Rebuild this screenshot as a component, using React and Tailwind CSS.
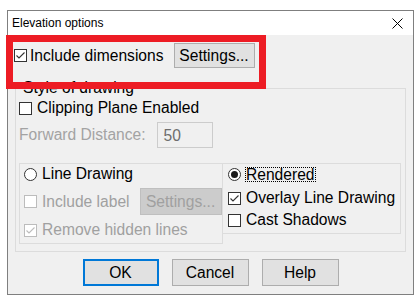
import React from "react";

function Check({ checked, disabled }) {
	return (
		<span className={disabled ? "w-[13px] h-[13px] border border-[#bcbcbc] bg-white flex items-center justify-center shrink-0" : "w-[13px] h-[13px] border border-[#333333] bg-white flex items-center justify-center shrink-0"}>
			{checked && (
				<svg width="11" height="11" viewBox="0 0 11 11">
					<path d="M1.5 5.5 L4 8 L9.5 2.5" fill="none" stroke={disabled ? "#bcbcbc" : "#333333"} strokeWidth="1.1" />
				</svg>
			)}
		</span>
	);
}

function Radio({ checked }) {
	return (
		<span className="w-[13px] h-[13px] rounded-full border border-[#333333] bg-white flex items-center justify-center shrink-0">
			{checked && <span className="w-[7px] h-[7px] rounded-full bg-[#1a1a1a]" />}
		</span>
	);
}

export default function App() {
	return (
		<div className="w-[420px] h-[300px] bg-white relative pt-[10px] pl-[7px] font-['Liberation_Sans',Arial,sans-serif] text-black">
			<div className="w-[407px] h-[285px] border border-[#7f7f7f] flex flex-col">
				{/* title bar */}
				<div className="h-[24px] bg-white flex items-center justify-between pl-[4px] pr-[10px]">
					<span className="text-[12px]">Elevation options</span>
					<svg width="11" height="11" viewBox="0 0 11 11">
						<path d="M0.5 0.5 L10.5 10.5 M10.5 0.5 L0.5 10.5" stroke="#000" strokeWidth="1" />
					</svg>
				</div>

				<div className="flex-1 bg-[#f0f0f0] text-[15.6px] leading-[18px]">
					{/* top row */}
					<div className="flex items-center mt-[8px] pl-[6px] h-[25px]">
						<Check checked />
						<span className="ml-[3px]">Include dimensions</span>
						<button className="ml-[10px] w-[81px] h-[25px] border border-[#adadad] bg-[#e1e1e1]">Settings...</button>
					</div>

					{/* group */}
					<fieldset className="mx-[7px] mt-[11px] border border-[#dcdcdc] px-[3px] pb-[7px]">
						<legend className="ml-[1px] px-[3px]">Style of drawing</legend>

						<div className="flex items-center h-[18px] mt-[2px]">
							<Check />
							<span className="ml-[5px]">Clipping Plane Enabled</span>
						</div>

						<div className="flex items-center mt-[5px]">
							<span className="text-[#a3a3a3]">Forward Distance:</span>
							<div className="ml-[11px] w-[56px] h-[26px] border border-[#cccccc] bg-[#f0f0f0] text-[#6d6d6d] pl-[6px] pt-[4px]">50</div>
						</div>

						<div className="flex items-start mt-[15px]">
							<div className="w-[204px] h-[81px] border border-[#dcdcdc] pl-[4px] pt-[1px]">
								<div className="flex items-center h-[18px]">
									<Radio />
									<span className="ml-[5px]">Line Drawing</span>
								</div>
								<div className="flex items-center mt-[5px] text-[#a0a0a0]">
									<Check disabled />
									<span className="ml-[5px]">Include label</span>
									<button className="ml-[10px] w-[82px] h-[27px] border border-[#bfbfbf] bg-[#cccccc] text-[#a0a0a0]">Settings...</button>
								</div>
								<div className="flex items-center h-[18px] mt-[6px] text-[#a0a0a0]">
									<Check checked disabled />
									<span className="ml-[5px]">Remove hidden lines</span>
								</div>
							</div>
							<div className="-ml-px w-[179px] h-[71px] border border-[#dcdcdc] pl-[5px] pt-[1px]">
								<div className="flex items-center h-[18px]">
									<Radio checked />
									<span className="ml-[4px] border border-dotted border-black leading-[13px]">Rendered</span>
								</div>
								<div className="flex items-center h-[18px] mt-[6px]">
									<Check checked />
									<span className="ml-[5px]">Overlay Line Drawing</span>
								</div>
								<div className="flex items-center h-[18px] mt-[4px]">
									<Check />
									<span className="ml-[5px]">Cast Shadows</span>
								</div>
							</div>
						</div>
					</fieldset>

					{/* buttons */}
					<div className="flex justify-center gap-[13px] mt-[7px]">
						<button className="w-[76px] h-[27px] border-2 border-[#0078d7] bg-[#e1e1e1]">OK</button>
						<button className="w-[77px] h-[27px] border border-[#adadad] bg-[#e1e1e1]">Cancel</button>
						<button className="w-[77px] h-[27px] border border-[#adadad] bg-[#e1e1e1]">Help</button>
					</div>
				</div>
			</div>

			{/* red annotation box */}
			<div className="absolute left-[6px] top-[35px] w-[260px] h-[54px] border-[7px] border-[#ed1c24]" />
		</div>
	);
}
